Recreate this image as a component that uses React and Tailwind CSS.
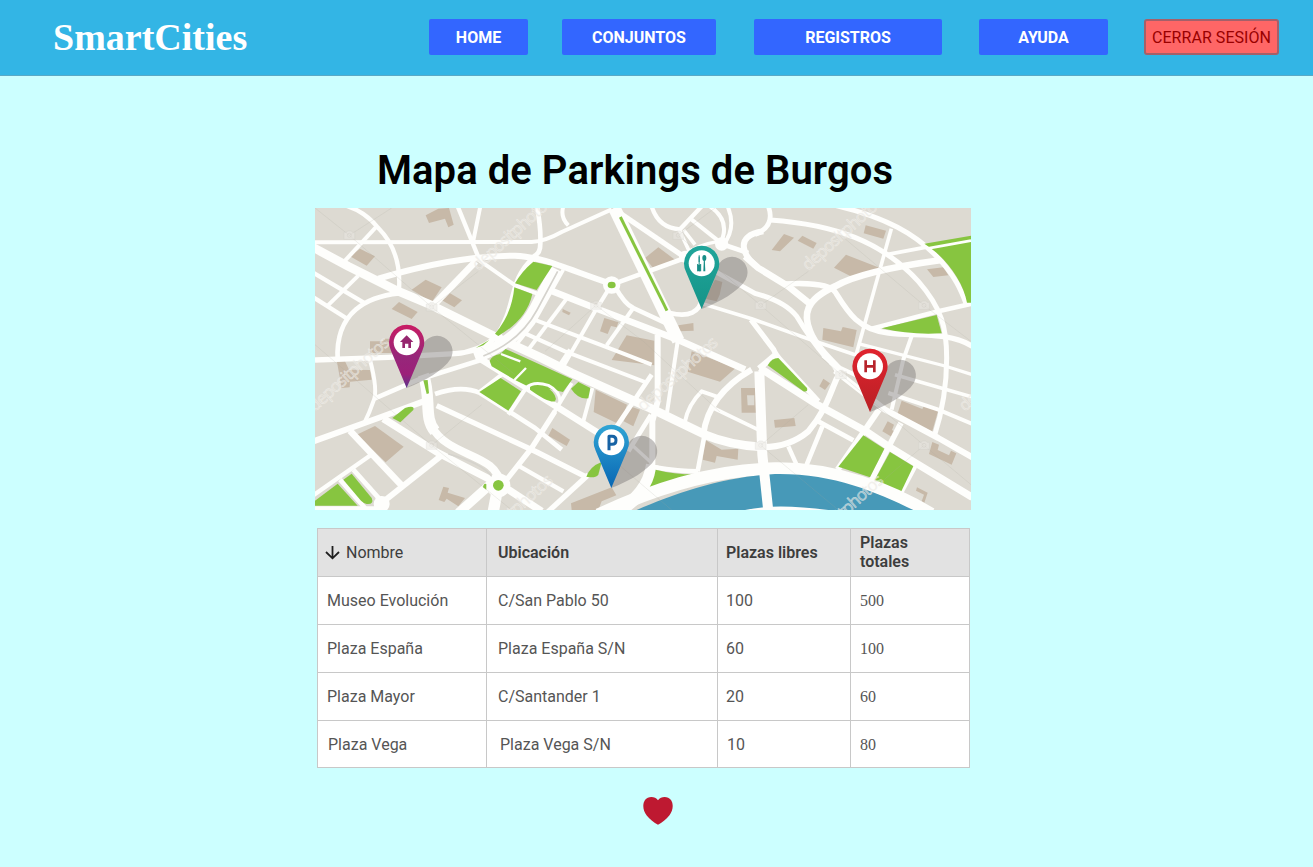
import React from "react";

const BROWN = "#c7b9a8";
const GREEN = "#87c540";

const browns = [
  "M332 22L370 2L402 0L416 50L400 58L390 32L342 45Z",
  "M105 145L135 122L180 145L155 173Z",
  "M290 245L332 215L380 238L350 283Z",
  "M378 275L400 253L441 277L418 298Z",
  "M230 303L252 282L308 312L290 333Z",
  "M165 400H205V392H240V435H165Z",
  "M66 462L90 460L102 485L165 486L170 515L105 521L104 538L80 540Z",
  "M125 680L180 654L266 716L212 763Z",
  "M385 836L402 840L398 854L450 870L430 895L395 872L388 882L371 876Z",
  "M990 150L1030 118L1080 155L1075 165L1015 181Z",
  "M743 303L767 314L762 322L742 312Z",
  "M868 330L910 343L905 358L888 354L878 378L855 370Z",
  "M935 382L1018 398L1018 472L890 456Z",
  "M1090 352L1135 345L1136 368L1090 370Z",
  "M1200 215L1222 222L1214 260L1205 280L1170 272Z",
  "M842 545L936 590L915 650L836 612Z",
  "M945 595L975 605L955 655L926 640Z",
  "M712 660L765 695L755 714L700 683Z",
  "M768 886L890 838L904 862L860 880L850 906H770Z",
  "M1130 430L1262 480L1215 521L1118 491Z",
  "M1278 540H1325V614H1280Z",
  "M1170 695L1220 725L1270 722L1268 755L1205 744L1200 764L1163 755Z",
  "M1370 126L1407 78L1437 89L1395 130Z",
  "M1448 98L1462 83L1505 105L1495 122Z",
  "M1557 179L1593 140L1695 180L1610 206Z",
  "M1652 52L1713 68L1705 92L1646 76Z",
  "M1836 184L1885 178L1900 202L1855 207Z",
  "M1525 360L1578 370L1583 357L1625 366L1615 418L1522 395Z",
  "M1377 636L1438 630L1442 654L1380 659Z",
  "M1525 512L1545 526L1530 546L1513 535Z",
  "M1760 578L1822 603L1828 592L1870 607L1850 676L1745 625Z",
  "M1718 640L1737 650L1731 666L1745 675L1732 688L1702 670Z",
  "M1852 702L1872 710L1868 726L1902 742L1908 728L1924 736L1910 770L1842 738Z",
  "M1806 838L1838 854L1828 884L1820 880L1827 860L1803 848Z",
];

const roads = [
  [12, "M0 103L650 102Q690 100 740 72L890 4"],
  [26, "M-10 116L100 175L250 250L350 292L540 386L680 450L770 495L1005 600L1170 680Q1240 710 1340 717"],
  [13, "M90 -8Q150 10 190 60Q260 130 252 245"],
  [12, "M185 55L90 158"],
  [18, "M190 212C330 170 480 143 600 143C680 145 760 185 890 228"],
  [13, "M428 -5L492 152"],
  [12, "M496 -5L475 98"],
  [20, "M355 292L482 160"],
  [12, "M490 155L600 232L665 256"],
  [13, "M-5 194L150 286"],
  [12, "M130 203L35 296"],
  [13, "M-5 268L98 333"],
  [14, "M252 256C160 265 60 310 68 455"],
  [16, "M0 456L220 448L420 437Q490 432 540 390"],
  [18, "M655 152C580 220 610 290 545 388"],
  [36, "M722 182L662 300C630 360 580 410 480 448"],
  [12, "M745 -5Q735 28 760 52"],
  [14, "M666 -5Q680 70 675 120Q672 138 655 146"],
  [38, "M898 0L1090 398"],
  [16, "M895 2L1110 148"],
  [14, "M1110 150L890 230"],
  [12, "M888 232L840 310L745 475"],
  [14, "M900 236Q930 290 955 300L1075 356"],
  [12, "M955 300L875 412"],
  [20, "M700 245L840 300L1095 398L1290 485"],
  [11, "M745 185L655 345L600 415"],
  [12, "M755 272L640 425"],
  [12, "M650 332L910 431L1010 470"],
  [12, "M625 374L750 430L990 522"],
  [18, "M1028 380V580L1012 640L1012 790"],
  [12, "M1088 400L1055 620"],
  [14, "M1065 315Q1150 335 1162 270"],
  [13, "M1010 -5Q1030 60 1095 64L1160 -5"],
  [11, "M1092 64L1122 128M1106 66L1140 110"],
  [12, "M1130 35L1212 100"],
  [10, "M1105 140Q1150 110 1210 100"],
  [12, "M1185 -5Q1250 40 1215 108"],
  [12, "M1238 -5Q1265 60 1225 110"],
  [20, "M1290 145L1330 180L1420 235L1488 290"],
  [14, "M1220 108L1300 135"],
  [18, "M1345 70Q1280 80 1287 120Q1290 145 1320 172"],
  [14, "M1320 80Q1382 55 1360 -5"],
  [15, "M1366 36C1560 50 1700 100 1810 220C1880 300 1895 360 1895 450Q1895 570 1858 685"],
  [15, "M1560 -8C1720 30 1800 80 1860 140C1920 200 1940 250 1955 292"],
  [11, "M1729 62L1622 445"],
  [11, "M1715 140L1830 118L1972 96"],
  [20, "M1880 156C1740 175 1620 200 1560 235C1470 275 1465 320 1485 370C1500 410 1540 450 1570 480"],
  [16, "M1408 228C1500 222 1550 235 1562 254C1600 315 1630 365 1720 375C1800 385 1900 370 1972 415"],
  [14, "M1670 362L1870 310L1972 287"],
  [15, "M1200 190L1320 256Q1410 280 1445 325Q1490 400 1530 445"],
  [11, "M1165 288L1310 332L1500 400L1620 440"],
  [16, "M1308 335L1376 425Q1382 440 1400 460L1510 580"],
  [18, "M1382 440L1332 482"],
  [22, "M1335 480L1510 592L1650 668L1720 715L1972 868"],
  [18, "M1525 440Q1585 490 1565 512C1540 570 1530 610 1480 670Q1420 720 1335 717"],
  [18, "M1560 488L1710 605L1870 690L1972 748"],
  [12, "M1545 465L1630 505"],
  [10, "M1630 407L1890 474L1972 500"],
  [11, "M1740 500L1972 567"],
  [12, "M1720 555L1870 605L1972 648"],
  [12, "M1790 384L1765 455L1730 605"],
  [18, "M1692 605L1568 785"],
  [17, "M1758 645L1670 815"],
  [14, "M1800 775L1755 860"],
  [14, "M1500 635L1615 697M1522 655L1475 770"],
  [13, "M1420 715L1447 775"],
  [12, "M165 455Q190 550 175 580Q165 610 148 645"],
  [18, "M-5 700L190 630L340 575"],
  [14, "M178 572L310 515L500 455"],
  [34, "M325 500C350 570 325 630 360 670"],
  [24, "M350 655C400 750 550 735 555 830"],
  [22, "M205 632L370 735L540 822"],
  [14, "M360 558Q440 530 495 555L660 660L740 725"],
  [20, "M500 455L660 555L850 675"],
  [16, "M365 593L665 732L810 805"],
  [12, "M560 500L493 552M630 545L580 620"],
  [20, "M105 668L265 838"],
  [13, "M172 738L-5 862"],
  [18, "M380 742L200 885"],
  [14, "M75 815L150 900M115 785L200 880"],
  [18, "M0 904H215"],
  [34, "M550 830L534 915"],
  [28, "M525 830L430 915"],
  [22, "M565 835L680 910"],
  [16, "M575 815L650 720L720 610"],
  [13, "M610 773L745 850"],
  [16, "M820 800L695 915"],
  [12, "M770 525L718 612M832 540L805 640M735 470L765 425"],
  [14, "M1010 500L905 655M1008 620L940 730"],
  [10, "M955 715L1010 765"],
  [38, "M1012 770Q1000 860 900 915"],
  [14, "M1020 778Q1090 790 1150 790"],
  [14, "M1167 690L1148 790"],
  [18, "M1165 680Q1180 560 1310 485"],
  [12, "M1110 640Q1120 590 1160 550L1212 568"],
  [11, "M1195 600L1340 670"],
];

const greens = [
  "M655 161L712 174L665 246L600 226Q620 190 655 161Z",
  "M598 238L652 258C640 315 600 355 550 384L540 377Q590 320 598 238Z",
  "M482 420L523 396L505 412Z",
  "M325 517L338 516L342 556L335 558Z",
  "M232 630L270 600Q300 590 295 606L256 643Z",
  "M524 459Q530 443 555 438L572 423L772 514L744 552L690 540L635 533L600 516L530 475Z",
  "M645 536Q665 525 700 540Q730 565 720 580Q700 585 645 545Z",
  "M768 542L790 522L826 540L820 571Q790 575 768 542Z",
  "M493 552L557 510L618 550L580 608Z",
  "M0 893V878L68 827L128 893Z",
  "M85 815L110 797L170 870Q178 890 155 888Q145 885 138 878Z",
  "M504 838Q506 824 514 828V845Z",
  "M814 806Q825 775 860 762L850 800Q840 812 814 806Z",
  "M1022 785Q1080 800 1148 799L992 855Q1016 825 1022 785Z",
  "M1358 472Q1370 450 1390 450L1476 540Q1480 553 1465 550Z",
  "M1645 682L1708 722L1665 808L1570 776Z",
  "M1725 732L1795 775L1758 852L1678 818Z",
  "M1700 361L1865 321L1880 376Q1790 382 1700 361Z",
  "M1828 107L1968 83V284H1956C1945 220 1890 145 1828 107Z",
];

const marks = [[490, 190], [1480, 190], [0, 612], [985, 612], [1950, 612], [490, 1025], [1482, 1025]];
const cameras = [[103, 82], [350, 297], [843, 292], [1337, 292], [1827, 292], [350, 712], [1337, 712], [1827, 712], [1090, 82], [1578, 500]];

function Pin({ x, y, fill, children }) {
  return (
    <g transform={`translate(${x} ${y})`}>
      <path d="M0 137C20 80 40 30 50 5A46 46 0 1 1 132 49C110 85 55 115 0 137Z" fill="#6d6a68" opacity=".4" />
      <path d="M0 137L-47 25A53 53 0 1 1 47 25Z" fill={fill} />
      <circle r="39" fill="white" />
      {children}
    </g>
  );
}

function CityMap() {
  return (
    <svg viewBox="0 0 1968 906" preserveAspectRatio="none" className="block h-[302px] w-[656px]" role="img">
      <defs>
        <linearGradient id="home" x1="0" y1="0" x2="0" y2="1">
          <stop offset="0" stopColor="#c91c64" />
          <stop offset=".5" stopColor="#96277a" />
          <stop offset=".78" stopColor="#9c2079" />
          <stop offset="1" stopColor="#5b358c" />
        </linearGradient>
        <linearGradient id="parking" x1="0" y1="0" x2="0" y2="1">
          <stop offset="0" stopColor="#30a5d5" />
          <stop offset="1" stopColor="#0866b3" />
        </linearGradient>
        <linearGradient id="food" x1="0" y1="0" x2="0" y2="1">
          <stop offset="0" stopColor="#20a59a" />
          <stop offset="1" stopColor="#159488" />
        </linearGradient>
        <linearGradient id="hospital" x1="0" y1="0" x2="0" y2="1">
          <stop offset="0" stopColor="#e0232e" />
          <stop offset="1" stopColor="#b92025" />
        </linearGradient>
      </defs>
      <rect width="1968" height="906" fill="#dddad2" />
      {browns.map((d) => <path key={d} d={d} fill={BROWN} />)}
      <path d="M1296 562H1318V592H1298Z" fill="#dddad2" />
      <g fill="none" stroke="#fefefc" strokeLinejoin="round">
        {roads.map(([w, d]) => <path key={d} d={d} strokeWidth={w} />)}
      </g>
      <circle cx="890" cy="231" r="26" fill="#fefefc" />
      <circle cx="550" cy="832" r="36" fill="#fefefc" />
      <circle cx="200" cy="888" r="24" fill="#fefefc" />
      <circle cx="1110" cy="146" r="18" fill="#fefefc" />
      <circle cx="1220" cy="108" r="20" fill="#fefefc" />
      {greens.map((d) => <path key={d} d={d} fill={GREEN} />)}
      <path d="M916 27L1056 308" stroke={GREEN} strokeWidth="9" />
      <ellipse cx="890" cy="231" rx="12" ry="10" fill={GREEN} />
      <circle cx="550" cy="832" r="16" fill={GREEN} />
      <g fill="none" stroke="#fefefc">
        <path d="M1835 122L1968 98" strokeWidth="8" />
        <path d="M633 480L598 516M558 438L616 460" strokeWidth="7" />
        <path d="M632 540Q655 518 700 532Q735 550 735 580" strokeWidth="9" />
      </g>
      <path d="M728 190L666 306C636 362 590 410 505 444" fill="none" stroke="#d5d3cd" strokeWidth="5" />
      <path d="M400 738Q500 765 530 805" fill="none" stroke="#d5d3cd" strokeWidth="4" />
      <path d="M850 920C1000 850 1180 785 1380 782C1560 780 1730 845 1848 918" fill="none" stroke="#fefefc" strokeWidth="38" />
      <path d="M965 906C1080 855 1230 805 1380 798C1550 795 1680 850 1795 906Z" fill="#4799b8" />
      <path d="M1290 906Q1380 885 1540 906Z" fill="#fefefc" />
      <path d="M1333 490L1342 740L1360 910" fill="none" stroke="#fefefc" strokeWidth="30" />
      <g fill="none" stroke="#aaa69f" strokeWidth="1.5" opacity=".35">
        <path d="M0 0L103 82L350 297L600 500M103 82L230 0M350 297L490 190M843 292L985 400L1215 612M843 292L690 430M1090 82L1337 292L1578 500L1827 712L1968 830M1090 82L1200 0M1578 82L1827 292L1968 400M350 712L590 906M350 712L500 590M843 712L1070 906M1337 712L1570 906M1337 712L1480 590M1827 712L1690 830M0 410L350 712M1337 292L1480 190" />
      </g>
      {cameras.map(([x, y]) => (
        <g key={`${x}-${y}`} transform={`translate(${x} ${y})`} opacity=".5">
          <path d="M-16 -9H-8L-5 -13H6L9 -9H16V12H-16Z" fill="#e9e7e2" stroke="#cfccc6" strokeWidth="1.5" />
          <circle r="6" fill="none" stroke="#cfccc6" strokeWidth="2" />
        </g>
      ))}
      {marks.map(([x, y]) => (
        <text key={`${x}-${y}`} transform={`translate(${x} ${y}) rotate(-42)`} textLength="305" fontSize="50" fill="#dddad2" fillOpacity=".45" stroke="#f6f4f1" strokeOpacity=".6" strokeWidth="2" className="font-['Open_Sans',sans-serif]">
          depositphotos
        </text>
      ))}
      <Pin x={275} y={403} fill="url(#home)">
        <path d="M0 -21L20 -1H13V17H5V4H-5V17H-13V-1H-20Z" fill="#96266f" />
      </Pin>
      <Pin x={1160} y={166} fill="url(#food)">
        <path d="M-12 -24V-2M-3 -24V-2M-7.5 4V20" stroke="#178d87" strokeWidth="3" fill="none" transform="matrix(1 0 0 -1 0 0)" />
        <path d="M-12 4H-3V21Q-7 28 -12 21Z" fill="#178d87" />
        <path d="M-9 -24H-6V6H-9Z" fill="#178d87" />
        <ellipse cx="8" cy="-16" rx="6" ry="9" fill="#178d87" />
        <path d="M6.5 -9H9.5L11 24H5Z" fill="#178d87" />
      </Pin>
      <Pin x={1665} y={475} fill="url(#hospital)">
        <path d="M-13 -18V18M13 -18V18M-13 0H13" stroke="#b7232b" strokeWidth="8" />
      </Pin>
      <Pin x={889} y={703} fill="url(#parking)">
        <path d="M-7 24V-18H2Q14 -18 14 -6Q14 6 2 6H-7" stroke="#1763a5" strokeWidth="9" strokeLinejoin="round" fill="none" />
      </Pin>
    </svg>
  );
}

const rows = [
  ["Museo Evolución", "C/San Pablo 50", "100", "500"],
  ["Plaza España", "Plaza España S/N", "60", "100"],
  ["Plaza Mayor", "C/Santander 1", "20", "60"],
  ["Plaza Vega", "Plaza Vega S/N", "10", "80"],
];

export default function App() {
  return (
    <div className="h-[867px] w-[1313px] overflow-hidden bg-[#ccffff] font-['Roboto',sans-serif] text-base">
      <header className="flex h-[76px] items-start border-b border-[#5aa9c6] bg-[#33b5e5] pt-[19px] pl-[53px]">
        <div className="w-[376px] font-['Liberation_Serif',serif] text-[38px] leading-[36px] font-bold text-white">
          SmartCities
        </div>
        <nav className="flex h-9 text-center leading-[38px] font-bold text-white">
          <a className="w-[99px] rounded-[2px] bg-[#3366ff]">HOME</a>
          <a className="ml-[34px] w-[154px] rounded-[2px] bg-[#3366ff]">CONJUNTOS</a>
          <a className="ml-[38px] w-[188px] rounded-[2px] bg-[#3366ff]">REGISTROS</a>
          <a className="ml-[37px] w-[129px] rounded-[2px] bg-[#3366ff]">AYUDA</a>
          <a className="ml-9 w-[135px] rounded-[3px] border-2 border-[#a5606a] bg-[#ff6666] leading-[34px] font-normal tracking-[0.06px] whitespace-nowrap text-[#990000]">
            CERRAR SESIÓN
          </a>
        </nav>
      </header>
      <main className="ml-[315px] w-[656px] pt-[71px]">
        <h1 className="ml-[62px] h-[61px] text-[40px] leading-[48px] font-semibold tracking-[0.06px] whitespace-nowrap text-black">
          Mapa de Parkings de Burgos
        </h1>
        <CityMap />
        <table className="mt-[18px] ml-[2px] w-[653px] table-fixed border-collapse text-left text-[#555555]">
          <colgroup>
            <col className="w-[169px]" />
            <col className="w-[231px]" />
            <col className="w-[133px]" />
            <col className="w-[119px]" />
          </colgroup>
          <thead>
            <tr className="h-12 bg-[#e2e2e2] leading-[19px] text-[#3d3d3d]">
              <th className="border border-[#c8c8c8] p-0 pl-[7px] font-normal">
                <span className="flex items-center gap-[6px]">
                  <svg viewBox="0 0 15 15" className="h-[15px] w-[15px]" fill="none" stroke="#1f1f1f" strokeWidth="1.8">
                    <path d="M7.5 1V13M1 7L7.5 13.3L14 7" />
                  </svg>
                  Nombre
                </span>
              </th>
              <th className="border border-[#c8c8c8] p-0 pl-[11px] font-semibold">Ubicación</th>
              <th className="border border-[#c8c8c8] p-0 pl-2 font-semibold">Plazas libres</th>
              <th className="border border-[#c8c8c8] p-0 pb-[2px] pl-[9px] font-semibold">Plazas<br />totales</th>
            </tr>
          </thead>
          <tbody>
            {rows.map(([name, place, free, total], i) => (
              <tr key={name} className={i === 3 ? "h-[47px] bg-white" : "h-12 bg-white"}>
                <td className={i === 3 ? "border border-[#c8c8c8] p-0 pt-px pl-[10px]" : "border border-[#c8c8c8] p-0 pl-[9px]"}>{name}</td>
                <td className={i === 3 ? "border border-[#c8c8c8] p-0 pt-px pl-[13px]" : "border border-[#c8c8c8] p-0 pl-[11px]"}>{place}</td>
                <td className={i === 3 ? "border border-[#c8c8c8] p-0 pt-px pl-[9px]" : "border border-[#c8c8c8] p-0 pl-2"}>{free}</td>
                <td className={i === 3 ? "border border-[#c8c8c8] p-0 pt-px pl-[9px] font-['Liberation_Serif',serif]" : "border border-[#c8c8c8] p-0 pl-[9px] font-['Liberation_Serif',serif]"}>{total}</td>
              </tr>
            ))}
          </tbody>
        </table>
        <svg viewBox="0 0 30 28" className="mt-[29px] ml-[328px] h-7 w-[30px]">
          <path d="M15 3.2C18-.9 25-.9 28 3C31 7.5 29.8 14 26.3 18.5C23.2 22.5 19 25.5 15 27.7C11 25.5 6.8 22.5 3.7 18.5C.2 14-1 7.5 2 3C5-.9 12-.9 15 3.2Z" fill="#be1931" />
        </svg>
      </main>
    </div>
  );
}
